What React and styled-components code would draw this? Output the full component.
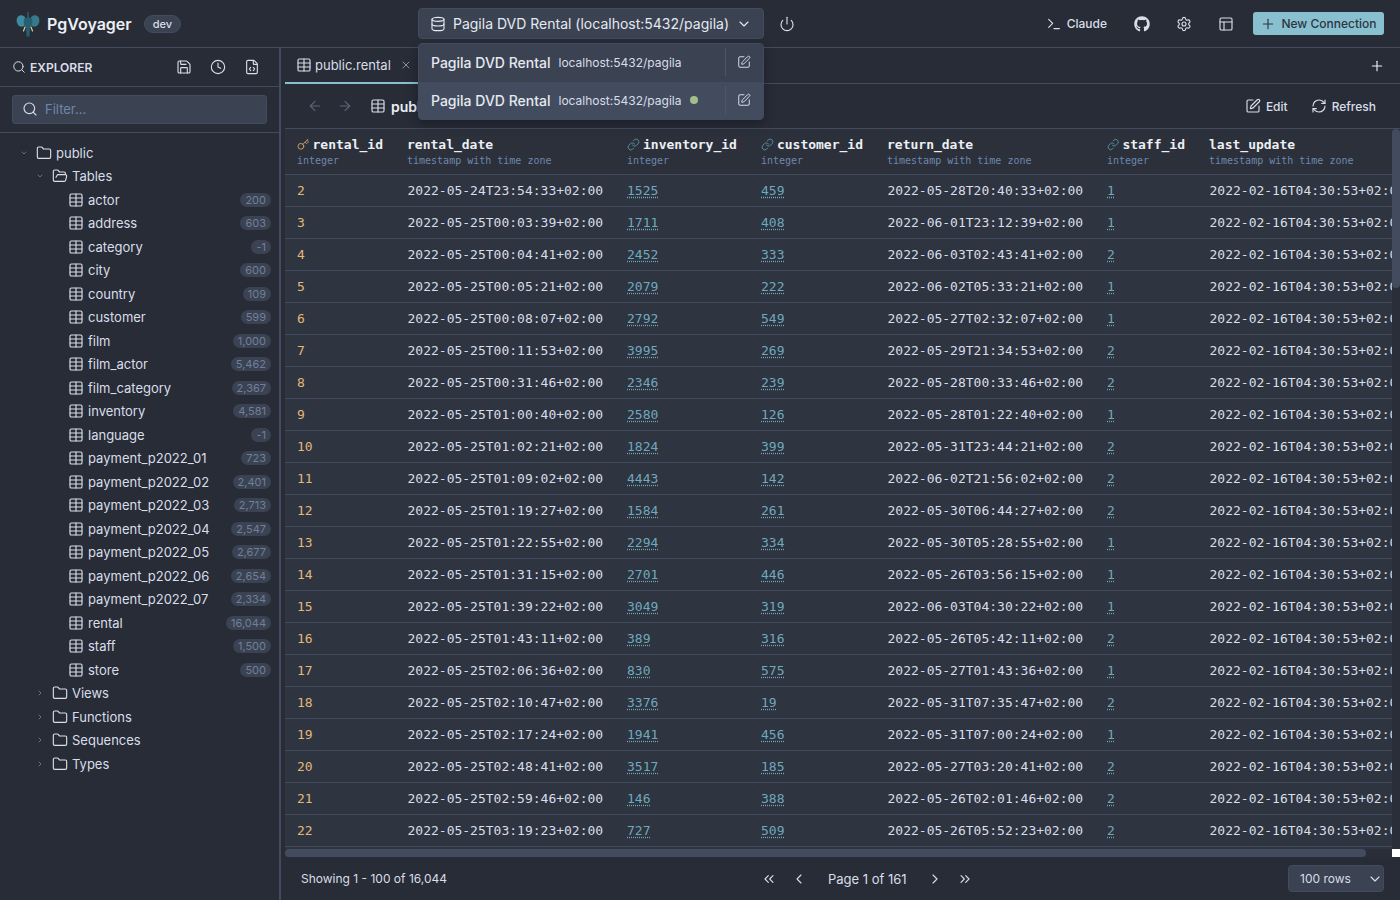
import styled, { createGlobalStyle } from "styled-components";
import {
  ArrowLeft,
  ArrowRight,
  ChevronDown,
  ChevronLeft,
  ChevronRight,
  ChevronsLeft,
  ChevronsRight,
  Clock,
  Database,
  FileCode,
  Folder,
  FolderOpen,
  Key,
  Layout,
  Link,
  Plus,
  Power,
  RefreshCw,
  Save,
  Search,
  Settings,
  SquarePen,
  Table,
  Terminal,
  X,
} from "lucide-react";
import { FaGithub } from "react-icons/fa";

const GlobalStyle = createGlobalStyle`
html, body {
  margin: 0;
  height: 100%;
  background: #282c37;
  overflow: hidden;
}
* {
  box-sizing: border-box;
}
svg.lucide {
  stroke-width: 1.7;
}
`;

const Page = styled.div`
  width: 1400px;
  height: 900px;
  display: flex;
  flex-direction: column;
  font-family: Inter, "Liberation Sans", sans-serif;
  color: #d8dee9;
  background: #282c37;
  position: relative;
`;

/* top bar */
const Header = styled.header`
  height: 48px;
  flex: none;
  display: flex;
  align-items: center;
  padding: 0 16px;
  border-bottom: 1px solid #434c5e;
`;
const Brand = styled.div`
  width: 402px;
  display: flex;
  align-items: center;
`;
const BrandName = styled.span`
  font-size: 16px;
  font-weight: 600;
  color: #eceff4;
  margin: 0 12px 0 7px;
`;
const EnvBadge = styled.span`
  height: 18px;
  padding: 0 8px;
  display: flex;
  align-items: center;
  border-radius: 9px;
  font-size: 11px;
  font-weight: 500;
  color: #d8dee9;
  background: #3b4252;
  border: 1px solid #434c5e;
`;
const ConnectionSelect = styled.div`
  width: 346px;
  height: 31px;
  display: flex;
  align-items: center;
  gap: 7px;
  padding: 0 11px;
  font-size: 14px;
  color: #e5e9f0;
  background: #3b4252;
  border: 1px solid #434c5e;
  border-radius: 4px;
`;
const ConnectionLabel = styled.span`
  flex: 1;
  white-space: nowrap;
`;
const PowerButton = styled.span`
  display: flex;
  margin-left: 15px;
  color: #d8dee9;
`;
const HeaderActions = styled.div`
  margin-left: auto;
  display: flex;
  align-items: center;
`;
const ClaudeButton = styled.span`
  display: flex;
  align-items: center;
  gap: 5px;
  margin-right: 1px;
  font-size: 12px;
  font-weight: 500;
  color: #d8dee9;
`;
const HeaderIcon = styled.span`
  display: flex;
  margin-left: 26px;
  color: #d8dee9;
`;
const NewConnection = styled.button`
  margin-left: 19px;
  width: 131px;
  height: 23px;
  display: flex;
  align-items: center;
  justify-content: center;
  gap: 5px;
  padding: 0;
  border: 0;
  border-radius: 3px;
  font-family: inherit;
  font-size: 12px;
  font-weight: 500;
  color: #2e3440;
  background: #88c0d0;
`;

/* connection dropdown */
const Dropdown = styled.div`
  position: absolute;
  left: 418px;
  top: 43px;
  width: 346px;
  z-index: 5;
  background: #3b4252;
  border: 1px solid #434c5e;
  border-radius: 4px;
  overflow: hidden;
  box-shadow: 0 4px 12px rgba(0, 0, 0, 0.3);
`;
const DropdownItem = styled.div`
  height: ${(p) => (p.$active ? "37px" : "38px")};
  display: flex;
  align-items: center;
  padding: 0 12px ${(p) => (p.$active ? "1px" : "2px")};
  background: ${(p) => (p.$active ? "#434c5e" : "#3b4252")};
`;
const ItemName = styled.span`
  font-size: 14px;
  font-weight: 500;
  color: #e5e9f0;
  white-space: nowrap;
`;
const ItemHost = styled.span`
  margin-left: 8px;
  font-size: 12px;
  color: #d8dee9;
  white-space: nowrap;
`;
const StatusDot = styled.span`
  width: 8px;
  height: 8px;
  margin-left: 9px;
  border-radius: 50%;
  background: #a3be8c;
`;
const ItemEdit = styled.span`
  margin-left: auto;
  width: 26px;
  height: 28px;
  display: flex;
  align-items: center;
  justify-content: flex-end;
  border-left: 1px solid #4c566a;
  color: #d8dee9;
`;

/* body */
const Body = styled.div`
  flex: 1;
  min-height: 0;
  display: flex;
`;
const Sidebar = styled.aside`
  width: 279px;
  flex: none;
  display: flex;
  flex-direction: column;
`;
const ExplorerBar = styled.div`
  height: 39px;
  flex: none;
  display: flex;
  align-items: center;
  padding: 0 19px 0 12px;
  border-bottom: 1px solid #434c5e;
`;
const ExplorerTitle = styled.span`
  margin-left: 4px;
  flex: 1;
  font-size: 12px;
  font-weight: 600;
  color: #d8dee9;
`;
const ExplorerIcons = styled.div`
  display: flex;
  gap: 18px;
  color: #d8dee9;
`;
const FilterWrap = styled.div`
  flex: none;
  height: 46px;
  padding: 8px 12px;
  border-bottom: 1px solid #434c5e;
`;
const FilterBox = styled.div`
  height: 29px;
  display: flex;
  align-items: center;
  gap: 7px;
  padding: 0 9px 1px;
  font-size: 13px;
  color: #6d88ab;
  background: #3b4252;
  border: 1px solid #434c5e;
  border-radius: 3px;
`;
const FilterIcon = styled(Search)`
  color: #d8dee9;
`;
const Tree = styled.div`
  padding: 8px 8px 0 0;
`;
const TreeRow = styled.div`
  height: 23.5px;
  display: flex;
  align-items: center;
  padding-left: ${(p) => 20 + p.$level * 16}px;
  font-size: 13px;
  color: #d8dee9;
`;
const Twisty = styled.span`
  width: 8px;
  margin-right: 8px;
  display: flex;
  justify-content: center;
  color: #9aa5b8;
`;
const TreeLabel = styled.span`
  margin-left: 4px;
`;
const CountBadge = styled.span`
  margin-left: auto;
  height: 14px;
  padding: 0 5px;
  display: flex;
  align-items: center;
  border-radius: 7px;
  font-size: 11px;
  color: #6f809b;
  background: #3b4252;
`;
const TableIconWrap = styled.span`
  display: flex;
  margin-left: 32px;
  color: #d8dee9;
`;

const Handle = styled.div`
  width: 6px;
  flex: none;
  border-left: 2px solid #434c5e;
`;

const Main = styled.main`
  flex: 1;
  min-width: 0;
  display: flex;
  flex-direction: column;
`;
const TabBar = styled.div`
  height: 36px;
  flex: none;
  display: flex;
  align-items: stretch;
  border-bottom: 1px solid #434c5e;
`;
const Tab = styled.div`
  width: 139px;
  display: flex;
  align-items: center;
  padding: 0 12px 0 11px;
  font-size: 13px;
  color: #d8dee9;
  border-bottom: 2px solid #88c0d0;
  margin-bottom: -1px;
`;
const TabLabel = styled.span`
  margin-left: 3px;
`;
const TabClose = styled.span`
  display: flex;
  margin-left: auto;
  color: #9aa5b8;
`;
const AddTab = styled.span`
  margin-left: auto;
  padding-right: 15px;
  display: flex;
  align-items: center;
  color: #eceff4;
`;
const Toolbar = styled.div`
  height: 45px;
  flex: none;
  display: flex;
  align-items: center;
  padding: 0 24px 0 22px;
  border-bottom: 1px solid #434c5e;
`;
const NavArrow = styled.span`
  display: flex;
  margin-right: 14px;
  color: #5a6579;
`;
const ToolbarIcon = styled.span`
  display: flex;
  margin-left: 3px;
  color: #d8dee9;
`;
const ToolbarTitle = styled.span`
  margin-left: 5px;
  font-size: 14px;
  font-weight: 600;
  color: #eceff4;
`;
const ToolbarButton = styled.span`
  display: flex;
  align-items: center;
  gap: 5px;
  font-size: 12px;
  font-weight: 500;
  color: #d8dee9;
  margin-left: ${(p) => (p.$first ? "auto" : "23px")};
`;

/* result grid, its scroll bars are drawn so they always show */
const Grid = styled.div`
  flex: 1;
  min-height: 0;
  display: grid;
  grid-template-columns: 1fr 8px;
  grid-template-rows: 1fr 8px;
  background: #2e3440;
`;
const Viewport = styled.div`
  overflow: hidden;
  min-width: 0;
  min-height: 0;
`;
const TrackY = styled.div`
  background: #2a2e39;
`;
const TrackX = styled.div`
  background: #2a2e39;
`;
const ThumbY = styled.div`
  width: 8px;
  height: ${(p) => p.$size}px;
  border-radius: 4px;
  background: #434c5e;
`;
const ThumbX = styled.div`
  height: 8px;
  width: ${(p) => p.$size}px;
  border-radius: 4px;
  background: #434c5e;
`;
const ScrollCorner = styled.div`
  background: #fff;
`;
const DataTable = styled.table`
  width: 1132px;
  table-layout: fixed;
  border-collapse: separate;
  border-spacing: 0;
`;
const HeadCell = styled.th`
  width: ${(p) => p.$width}px;
  height: 46px;
  padding: 0 12px;
  text-align: left;
  background: #2b303b;
  border-bottom: 1px solid #434c5e;
  font-weight: 400;
`;
const HeadName = styled.div`
  display: flex;
  align-items: center;
  gap: 3px;
  font-family: "DejaVu Sans Mono", monospace;
  font-size: 13px;
  font-weight: 700;
  line-height: 16px;
  color: #eceff4;
  white-space: nowrap;
`;
const HeadType = styled.div`
  margin-top: 1px;
  font-family: "DejaVu Sans Mono", monospace;
  font-size: 10px;
  line-height: 13px;
  color: #6d88ab;
  white-space: nowrap;
`;
const Cell = styled.td`
  height: 32px;
  padding: 0 12px;
  padding-left: ${(p) => (p.$date ? "12.5px" : "12px")};
  border-bottom: 1px solid #434c5e;
  font-family: "DejaVu Sans Mono", monospace;
  font-size: 13px;
  color: ${(p) => (p.$num ? "#e0b878" : "#d8dee9")};
  white-space: nowrap;
  overflow: hidden;
`;
const ForeignKey = styled.span`
  color: #6fa9bb;
  text-decoration: underline dotted;
  text-underline-offset: 2px;
`;

const Footer = styled.footer`
  height: 43px;
  flex: none;
  display: flex;
  align-items: center;
  padding: 0 16px;
  position: relative;
  font-size: 12px;
  color: #d8dee9;
`;
const Pager = styled.div`
  position: absolute;
  left: 476px;
  display: flex;
  align-items: center;
  font-size: 13px;
  color: #d8dee9;
`;
const PagerIcon = styled.span`
  display: flex;
  margin-left: 14px;
`;
const PageLabel = styled.span`
  margin: 0 20px 0 21px;
`;
const RowsSelect = styled.div`
  margin-left: auto;
  width: 96px;
  height: 27px;
  display: flex;
  align-items: center;
  justify-content: space-between;
  padding: 0 0 0 11px;
  font-size: 12px;
  background: #3b4252;
  border: 1px solid #434c5e;
  border-radius: 4px;
`;

const TABLES = [
  ["actor", "200"],
  ["address", "603"],
  ["category", "-1"],
  ["city", "600"],
  ["country", "109"],
  ["customer", "599"],
  ["film", "1,000"],
  ["film_actor", "5,462"],
  ["film_category", "2,367"],
  ["inventory", "4,581"],
  ["language", "-1"],
  ["payment_p2022_01", "723"],
  ["payment_p2022_02", "2,401"],
  ["payment_p2022_03", "2,713"],
  ["payment_p2022_04", "2,547"],
  ["payment_p2022_05", "2,677"],
  ["payment_p2022_06", "2,654"],
  ["payment_p2022_07", "2,334"],
  ["rental", "16,044"],
  ["staff", "1,500"],
  ["store", "500"],
];

const COLUMNS = [
  { name: "rental_id", type: "integer", width: 110, icon: "key" },
  { name: "rental_date", type: "timestamp with time zone", width: 220 },
  { name: "inventory_id", type: "integer", width: 134, icon: "link" },
  { name: "customer_id", type: "integer", width: 126, icon: "link" },
  { name: "return_date", type: "timestamp with time zone", width: 220 },
  { name: "staff_id", type: "integer", width: 102, icon: "link" },
  { name: "last_update", type: "timestamp with time zone", width: 220 },
];

const ROWS = [
  [2, "05-24T23:54:33", 1525, 459, "05-28T20:40:33", 1],
  [3, "05-25T00:03:39", 1711, 408, "06-01T23:12:39", 1],
  [4, "05-25T00:04:41", 2452, 333, "06-03T02:43:41", 2],
  [5, "05-25T00:05:21", 2079, 222, "06-02T05:33:21", 1],
  [6, "05-25T00:08:07", 2792, 549, "05-27T02:32:07", 1],
  [7, "05-25T00:11:53", 3995, 269, "05-29T21:34:53", 2],
  [8, "05-25T00:31:46", 2346, 239, "05-28T00:33:46", 2],
  [9, "05-25T01:00:40", 2580, 126, "05-28T01:22:40", 1],
  [10, "05-25T01:02:21", 1824, 399, "05-31T23:44:21", 2],
  [11, "05-25T01:09:02", 4443, 142, "06-02T21:56:02", 2],
  [12, "05-25T01:19:27", 1584, 261, "05-30T06:44:27", 2],
  [13, "05-25T01:22:55", 2294, 334, "05-30T05:28:55", 1],
  [14, "05-25T01:31:15", 2701, 446, "05-26T03:56:15", 1],
  [15, "05-25T01:39:22", 3049, 319, "06-03T04:30:22", 1],
  [16, "05-25T01:43:11", 389, 316, "05-26T05:42:11", 2],
  [17, "05-25T02:06:36", 830, 575, "05-27T01:43:36", 1],
  [18, "05-25T02:10:47", 3376, 19, "05-31T07:35:47", 2],
  [19, "05-25T02:17:24", 1941, 456, "05-31T07:00:24", 1],
  [20, "05-25T02:48:41", 3517, 185, "05-27T03:20:41", 2],
  [21, "05-25T02:59:46", 146, 388, "05-26T02:01:46", 2],
  [22, "05-25T03:19:23", 727, 509, "05-26T05:52:23", 2],
];

const stamp = (s) => `2022-${s}+02:00`;

// the elephant mark next to the product name
const Logo = () => (
  <svg width="24" height="26" viewBox="0 0 24 26">
    <path d="M9 6C6 3 2 4 1 7c-1 3 0 6 2 8 2 1 5 1 6-1z" fill="#3f8a9e" />
    <path d="M15 6c3-3 7-2 8 1 1 3 0 6-2 8-2 1-5 1-6-1z" fill="#357a8c" />
    <path d="M8 8c1-2 7-2 8 0 1 3 0 7-2 9l-.5 8.500h-3L10 17C8 15 7 11 8 8z" fill="#265f70" />
    <path d="M12 1v6" stroke="#2b6272" strokeWidth="1.4" />
    <path d="M9 16l-1.500 4M15 16l1.500 4" stroke="#d8cfae" strokeWidth="1.200" strokeLinecap="round" />
  </svg>
);

const App = () => (
  <Page>
    <GlobalStyle />
    <Header>
      <Brand>
        <Logo />
        <BrandName>PgVoyager</BrandName>
        <EnvBadge>dev</EnvBadge>
      </Brand>
      <ConnectionSelect>
        <Database size={16} />
        <ConnectionLabel>Pagila DVD Rental (localhost:5432/pagila)</ConnectionLabel>
        <ChevronDown size={16} />
      </ConnectionSelect>
      <PowerButton>
        <Power size={16} />
      </PowerButton>
      <HeaderActions>
        <ClaudeButton>
          <Terminal size={16} />
          Claude
        </ClaudeButton>
        <HeaderIcon>
          <FaGithub size={16} />
        </HeaderIcon>
        <HeaderIcon>
          <Settings size={16} />
        </HeaderIcon>
        <HeaderIcon>
          <Layout size={16} />
        </HeaderIcon>
        <NewConnection>
          <Plus size={16} />
          New Connection
        </NewConnection>
      </HeaderActions>
    </Header>

    <Dropdown>
      <DropdownItem>
        <ItemName>Pagila DVD Rental</ItemName>
        <ItemHost>localhost:5432/pagila</ItemHost>
        <ItemEdit>
          <SquarePen size={14} />
        </ItemEdit>
      </DropdownItem>
      <DropdownItem $active>
        <ItemName>Pagila DVD Rental</ItemName>
        <ItemHost>localhost:5432/pagila</ItemHost>
        <StatusDot />
        <ItemEdit>
          <SquarePen size={14} />
        </ItemEdit>
      </DropdownItem>
    </Dropdown>

    <Body>
      <Sidebar>
        <ExplorerBar>
          <Search size={14} />
          <ExplorerTitle>EXPLORER</ExplorerTitle>
          <ExplorerIcons>
            <Save size={16} />
            <Clock size={16} />
            <FileCode size={16} />
          </ExplorerIcons>
        </ExplorerBar>
        <FilterWrap>
          <FilterBox>
            <FilterIcon size={16} />
            Filter...
          </FilterBox>
        </FilterWrap>
        <Tree>
          <TreeRow $level={0}>
            <Twisty>
              <ChevronDown size={12} />
            </Twisty>
            <Folder size={16} />
            <TreeLabel>public</TreeLabel>
          </TreeRow>
          <TreeRow $level={1}>
            <Twisty>
              <ChevronDown size={12} />
            </Twisty>
            <FolderOpen size={16} />
            <TreeLabel>Tables</TreeLabel>
          </TreeRow>
          {TABLES.map(([name, count]) => (
            <TreeRow key={name} $level={1}>
              <TableIconWrap>
                <Table size={16} />
              </TableIconWrap>
              <TreeLabel>{name}</TreeLabel>
              <CountBadge>{count}</CountBadge>
            </TreeRow>
          ))}
          {["Views", "Functions", "Sequences", "Types"].map((name) => (
            <TreeRow key={name} $level={1}>
              <Twisty>
                <ChevronRight size={12} />
              </Twisty>
              <Folder size={16} />
              <TreeLabel>{name}</TreeLabel>
            </TreeRow>
          ))}
        </Tree>
      </Sidebar>
      <Handle />
      <Main>
        <TabBar>
          <Tab>
            <Table size={16} />
            <TabLabel>public.rental</TabLabel>
            <TabClose>
              <X size={12} />
            </TabClose>
          </Tab>
          <AddTab>
            <Plus size={16} />
          </AddTab>
        </TabBar>
        <Toolbar>
          <NavArrow>
            <ArrowLeft size={16} />
          </NavArrow>
          <NavArrow>
            <ArrowRight size={16} />
          </NavArrow>
          <ToolbarIcon>
            <Table size={16} />
          </ToolbarIcon>
          <ToolbarTitle>public.rental</ToolbarTitle>
          <ToolbarButton $first>
            <SquarePen size={16} />
            Edit
          </ToolbarButton>
          <ToolbarButton>
            <RefreshCw size={16} />
            Refresh
          </ToolbarButton>
        </Toolbar>
        <Grid>
          <Viewport>
            <DataTable>
              <thead>
                <tr>
                  {COLUMNS.map((c) => (
                    <HeadCell key={c.name} $width={c.width}>
                      <HeadName>
                        {c.icon === "key" && <Key size={13} color="#d0a86e" />}
                        {c.icon === "link" && <Link size={13} color="#5f93a4" />}
                        {c.name}
                      </HeadName>
                      <HeadType>{c.type}</HeadType>
                    </HeadCell>
                  ))}
                </tr>
              </thead>
              <tbody>
                {ROWS.map(([id, rented, inventory, customer, returned, staff]) => (
                  <tr key={id}>
                    <Cell $num>{id}</Cell>
                    <Cell $date>{stamp(rented)}</Cell>
                    <Cell>
                      <ForeignKey>{inventory}</ForeignKey>
                    </Cell>
                    <Cell>
                      <ForeignKey>{customer}</ForeignKey>
                    </Cell>
                    <Cell $date>{stamp(returned)}</Cell>
                    <Cell>
                      <ForeignKey>{staff}</ForeignKey>
                    </Cell>
                    <Cell $date>2022-02-16T04:30:53+02:00</Cell>
                  </tr>
                ))}
              </tbody>
            </DataTable>
          </Viewport>
          <TrackY>
            <ThumbY $size={159} />
          </TrackY>
          <TrackX>
            <ThumbX $size={1081} />
          </TrackX>
          <ScrollCorner />
        </Grid>
        <Footer>
          Showing 1 - 100 of 16,044
          <Pager>
            <ChevronsLeft size={16} />
            <PagerIcon>
              <ChevronLeft size={16} />
            </PagerIcon>
            <PageLabel>Page 1 of 161</PageLabel>
            <ChevronRight size={16} />
            <PagerIcon>
              <ChevronsRight size={16} />
            </PagerIcon>
          </Pager>
          <RowsSelect>
            100 rows
            <ChevronDown size={16} />
          </RowsSelect>
        </Footer>
      </Main>
    </Body>
  </Page>
);

export default App;
